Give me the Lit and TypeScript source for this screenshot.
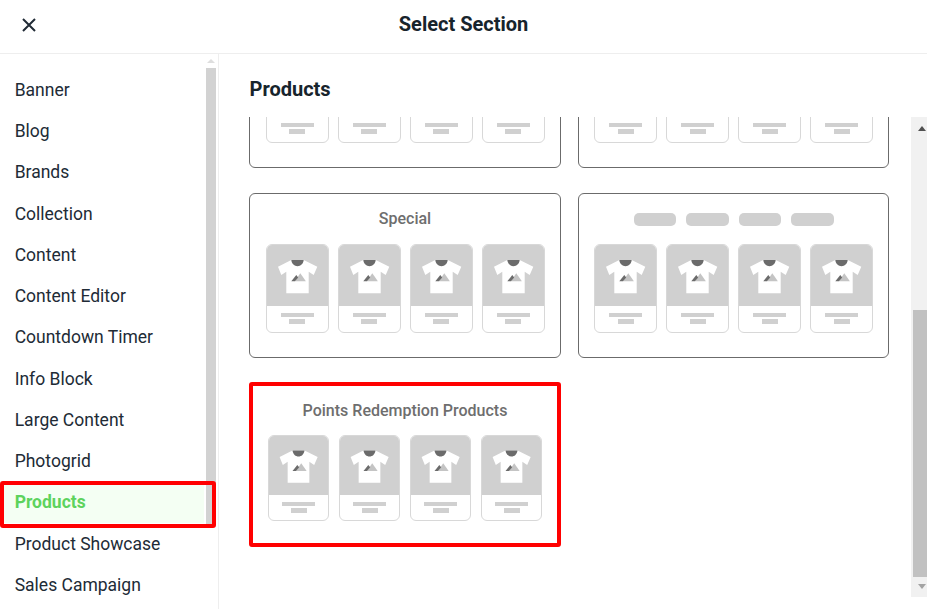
import { LitElement, html, css, svg } from "lit";
import { customElement, property } from "lit/decorators.js";

const shirt = svg`
  <path d="M25.3 16 12 22.7 15.3 31 20.3 27.7V49.3H42.7V27.7L47.7 31 51.3 22.7 37.7 16Z" fill="#fff"/>
  <path d="M25.3 16H37.7C37.2 20 34.5 22.2 31.5 22.2S25.8 20 25.3 16Z" fill="#6b6b6b"/>
  <path d="M34.3 29.3 28.7 37.3H39.9Z" fill="#c4c4c4"/>
  <path d="M25.3 37.3 30.3 31 32.2 33.4 28.9 37.3Z" fill="#6b6b6b"/>`;

@customElement("product-tile")
class ProductTile extends LitElement {
  static styles = css`
    :host { display: block; width: 63px; height: 89px; }
    :host([small]) { width: 61px; height: 86px; }
    .tile { box-sizing: border-box; height: 100%; display: flex; flex-direction: column; align-items: center;
      border: 1px solid #d8d8d8; border-radius: 6px; overflow: hidden; background: #fff; }
    .pic { flex: none; width: calc(100% + 2px); margin: -1px -1px 0; background: #d0d0d0; display: block; }
    .line { background: #d0d0d0; margin-top: 7px; width: 33px; height: 4px; flex: none; }
    .line.short { width: 16px; margin-top: 2px; height: 4.5px; }
  `;
  render() {
    return html`<div class="tile">
      <svg class="pic" viewBox="0 0 63 62">${shirt}</svg>
      <div class="line"></div><div class="line short"></div>
    </div>`;
  }
}

@customElement("section-card")
class SectionCard extends LitElement {
  @property() heading = "";
  @property({ type: Boolean }) pills = false;
  @property({ type: Boolean, reflect: true }) marked = false;
  static styles = css`
    :host { display: block; position: relative; }
    .card { box-sizing: border-box; height: 165px; border: 1px solid #6b6b6b; border-radius: 6px; background: #fff;
      display: flex; flex-direction: column; align-items: center; }
    .head { box-sizing: border-box; height: 50px; flex: none; display: flex; align-items: center; justify-content: center; gap: 10px;
      font: 500 16px Roboto, sans-serif; color: #6e6e6e; padding-bottom: 2px; }
    .head.with-pills { padding: 1px 0 0; }
    .pill { width: 42.5px; height: 13px; border-radius: 5px; background: #d0d0d0; }
    .tiles { display: flex; gap: 9px; }
    :host([marked]) .head { height: 52px; padding: 3px 0 0; }
    :host([marked]) .tiles { gap: 10px; }
    .mark { position: absolute; inset: 0; border: 4px solid #ff0000; border-radius: 3px; pointer-events: none; box-sizing: border-box; }
  `;
  render() {
    return html`<div class="card">
      <div class="head ${this.pills ? "with-pills" : ""}">
        ${this.pills ? html`<span class="pill"></span><span class="pill"></span><span class="pill"></span><span class="pill"></span>` : this.heading}
      </div>
      <div class="tiles">
        ${[0, 1, 2, 3].map(() => html`<product-tile ?small=${this.marked}></product-tile>`)}
      </div>
    </div>
    ${this.marked ? html`<div class="mark"></div>` : ""}`;
  }
}

const items = ["Banner", "Blog", "Brands", "Collection", "Content", "Content Editor", "Countdown Timer", "Info Block", "Large Content", "Photogrid", "Products", "Product Showcase", "Sales Campaign"];

@customElement("app-root")
class AppRoot extends LitElement {
  static styles = css`
    :host { display: block; height: 609px; overflow: hidden; background: #fff; font-family: Roboto, sans-serif; color: #212b36; }
    header { box-sizing: border-box; height: 54px; border-bottom: 1px solid #eeeeee; display: grid; grid-template-columns: 1fr auto 1fr; align-items: center; }
    .close { display: block; margin: -4px 0 0 21px; }
    h1 { margin: -5px 0 0; font: 700 20px Roboto, sans-serif; color: #17242c; }
    .body { display: flex; height: 555px; }
    aside { box-sizing: border-box; width: 219px; flex: none; border-right: 1px solid #eeeeee; display: flex; overflow: hidden; }
    ul { list-style: none; margin: 0; padding: 14.75px 0 0; width: 204px; flex: none; }
    li { box-sizing: border-box; height: 41.25px; line-height: 41.25px; padding: 1px 0 0 14.7px; font-size: 17.5px; position: relative; white-space: nowrap; }
    li.active { color: #5dd35d; font-weight: 700; background: #f4fff3; }
    li.active::after { content: ""; position: absolute; left: 0; top: 0; width: 216px; height: 47px; box-sizing: border-box;
      border: 4px solid #ff0000; border-radius: 3px; z-index: 2; }
    .side-bar { width: 10px; margin-left: 2px; flex: none; display: flex; flex-direction: column; align-items: center; }
    .side-arrow { margin-top: 5px; width: 0; height: 0; border: 4px solid transparent; border-top: 0; border-bottom: 4px solid #dedede; }
    .side-thumb { margin-top: 5px; width: 10px; height: 456px; background: #d2d2d2; }
    main { flex: 1; min-width: 0; display: flex; flex-direction: column; }
    h2 { margin: 0; height: 63px; box-sizing: border-box; padding: 24px 0 0 30.5px; font: 700 20px/23px Roboto, sans-serif; color: #17242c; }
    .view { height: 480px; display: flex; overflow: hidden; }
    .scroll { flex: 1; min-width: 0; overflow: hidden; padding-left: 30px; }
    .grid { display: grid; grid-template-columns: 312px 311px; column-gap: 17px; row-gap: 25px; margin-top: -114px; }
    .grid .last { margin-top: -1px; }
    .bar { width: 16px; flex: none; background: #f1f1f1; display: flex; flex-direction: column; align-items: flex-end; position: relative; }
    .up, .down { width: 0; height: 0; border: 4.5px solid transparent; margin-right: 1px; }
    .up { border-top: 0; border-bottom: 5px solid #505050; margin-top: 9px; }
    .thumb { width: 14px; height: 267px; margin-top: 179px; background: #c1c1c1; }
    .down { border-bottom: 0; border-top: 5px solid #a3a3a3; margin-top: 7px; }
  `;
  render() {
    return html`
      <header>
        <svg class="close" width="16" height="16" viewBox="0 0 16 16" fill="none" stroke="#212b36" stroke-width="2"><path d="M2 2 14 14M14 2 2 14"/></svg>
        <h1>Select Section</h1>
        <span></span>
      </header>
      <div class="body">
        <aside>
          <ul>${items.map((n) => html`<li class=${n === "Products" ? "active" : ""}>${n}</li>`)}</ul>
          <div class="side-bar"><div class="side-arrow"></div><div class="side-thumb"></div></div>
        </aside>
        <main>
          <h2>Products</h2>
          <div class="view">
            <div class="scroll">
              <div class="grid">
                <section-card></section-card>
                <section-card></section-card>
                <section-card heading="Special"></section-card>
                <section-card pills></section-card>
                <section-card class="last" heading="Points Redemption Products" marked></section-card>
              </div>
            </div>
            <div class="bar"><div class="up"></div><div class="thumb"></div><div class="down"></div></div>
          </div>
        </main>
      </div>`;
  }
}
